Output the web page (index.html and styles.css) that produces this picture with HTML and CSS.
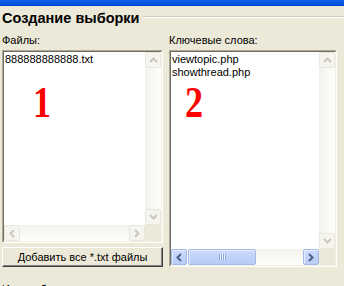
FILE: index.html
```html
<!DOCTYPE html>
<html lang="ru">
<head>
  <meta charset="UTF-8">
  <title>Создание выборки</title>
<link rel="stylesheet" href="styles.css">
</head>
<body>

  <div class="caption"></div>

  <div class="group-head">
    <h2>Создание выборки</h2>
    <div class="group-line"></div>
  </div>

  <div class="columns">
    <div class="col">
      <div class="field-label">Файлы:</div>
      <div class="listbox files">
        <div class="listbox-inner">
          <ul class="items">
            <li>888888888888.txt</li>
          </ul>
          <div class="vscroll">
            <div class="sb-btn off">
              <svg width="9" height="6" viewBox="0 0 9 6"><polyline points="1,5 4.5,1.5 8,5" /></svg>
            </div>
            <div class="sb-track"></div>
            <div class="sb-btn off">
              <svg width="9" height="6" viewBox="0 0 9 6"><polyline points="1,1 4.5,4.5 8,1" /></svg>
            </div>
          </div>
          <div class="hscroll">
            <div class="sb-btn off">
              <svg width="6" height="9" viewBox="0 0 6 9"><polyline points="5,1 1.5,4.5 5,8" /></svg>
            </div>
            <div class="sb-track"></div>
            <div class="sb-btn off">
              <svg width="6" height="9" viewBox="0 0 6 9"><polyline points="1,1 4.5,4.5 1,8" /></svg>
            </div>
          </div>
          <div class="corner"></div>
        </div>
        <span class="mark mark-1">1</span>
      </div>
      <button class="add-btn">Добавить все *.txt файлы</button>
    </div>

    <div class="col">
      <div class="field-label">Ключевые слова:</div>
      <div class="listbox keywords">
        <div class="listbox-inner">
          <ul class="items">
            <li>viewtopic.php</li>
            <li>showthread.php</li>
          </ul>
          <div class="vscroll">
            <div class="sb-btn off">
              <svg width="9" height="6" viewBox="0 0 9 6"><polyline points="1,5 4.5,1.5 8,5" /></svg>
            </div>
            <div class="sb-track"></div>
            <div class="sb-btn off">
              <svg width="9" height="6" viewBox="0 0 9 6"><polyline points="1,1 4.5,4.5 8,1" /></svg>
            </div>
          </div>
          <div class="hscroll">
            <div class="sb-btn on">
              <svg width="6" height="9" viewBox="0 0 6 9"><polyline points="5,1 1.5,4.5 5,8" /></svg>
            </div>
            <div class="sb-track">
              <div class="thumb"><span class="grip"></span></div>
            </div>
            <div class="sb-btn on">
              <svg width="6" height="9" viewBox="0 0 6 9"><polyline points="1,1 4.5,4.5 1,8" /></svg>
            </div>
          </div>
          <div class="corner"></div>
        </div>
        <span class="mark mark-2">2</span>
      </div>
    </div>
  </div>

  <div class="field-label next-label">Имя выборки:</div>

</body>
</html>
```

FILE: styles.css
```css
/* XP-style dialog: "Создание выборки" */
:root {
  --face:   #ECE9D8;
  --shadow: #ACA899;
  --dark:   #716F64;
  --light:  #F1EFE2;
  --red:    #FF0000;
}

body {
  margin: 0;
  width: 344px;
  height: 286px;
  overflow: hidden;
  background: var(--face);
  color: #000;
  font: 11px/13px "Liberation Sans", Arial, sans-serif;
}

.caption {
  height: 6px;
  background: linear-gradient(#0C5EEA, #0A55DF 70%, #0040C0);
}

.group-head {
  display: flex;
  padding: 3px 0 0 2px;
}
.group-head h2 {
  margin: 0;
  font-size: 14.5px;
  line-height: 18px;
  font-weight: bold;
}
.group-line {
  flex: 1;
  align-self: flex-start;
  margin: 7px 0 0 3px;
  border-top: 1px solid #D0D0BF;
  border-bottom: 1px solid #fff;
}

.columns {
  display: grid;
  grid-template-columns: 161px 168px;
  column-gap: 6px;
  padding-left: 2px;
  margin-top: 7px;
}

.field-label {
  height: 13px;
}

.listbox {
  position: relative;
  margin-top: 3px;
  border: 1px solid;
  border-color: var(--shadow) #fff #fff var(--shadow);
}
.listbox.files { height: 191px; }
.listbox.keywords { height: 215px; }

.listbox-inner {
  height: 100%;
  box-sizing: border-box;
  border: 1px solid;
  border-color: var(--dark) var(--light) var(--light) var(--dark);
  background: #fff;
  display: grid;
  grid-template-columns: 1fr 16px;
  grid-template-rows: 1fr 16px;
}

ul.items {
  list-style: none;
  margin: 0;
  padding: 1px 0 0 1px;
  overflow: hidden;
}

/* scrollbars */
.vscroll, .hscroll {
  display: flex;
  background: linear-gradient(to right, #F3F1EC, #FEFEFB);
}
.vscroll { flex-direction: column; }
.hscroll { background: linear-gradient(#F3F1EC, #FEFEFB); }
.sb-track { flex: 1; position: relative; }

.sb-btn {
  width: 16px;
  height: 16px;
  box-sizing: border-box;
  display: flex;
  align-items: center;
  justify-content: center;
  border-radius: 2px;
}
.sb-btn svg polyline {
  fill: none;
  stroke-width: 2;
}
.sb-btn.off {
  border: 1px solid #E8E7DF;
  background: #F5F4EF;
}
.sb-btn.off svg polyline { stroke: #CAC8BB; }
.sb-btn.on {
  border: 1px solid #A5B9E8;
  background: linear-gradient(#CCDBFD, #B8CBF7);
  box-shadow: inset 1px 1px 0 #E4ECFE;
}
.sb-btn.on svg polyline { stroke: #4D6185; }

.thumb {
  position: absolute;
  left: 1px;
  top: 0;
  width: 68px;
  height: 16px;
  box-sizing: border-box;
  border: 1px solid #A5B9E8;
  border-radius: 2px;
  background: linear-gradient(#CCDBFD, #B8CBF7);
  box-shadow: inset 1px 1px 0 #E4ECFE;
  display: flex;
  align-items: center;
  justify-content: center;
}
.grip {
  width: 7px;
  height: 6px;
  background: repeating-linear-gradient(to right, #8CA4DE 0 1px, #EEF3FE 1px 2px);
}

.corner { background: var(--face); }

/* red annotation numbers */
.mark {
  position: absolute;
  top: 30px;
  font: bold 44px/44px "Liberation Serif", "Times New Roman", serif;
  color: var(--red);
  transform: scaleX(0.82);
  transform-origin: left top;
}
.mark-1 { left: 30px; }
.mark-2 { left: 15px; }

.add-btn {
  display: block;
  width: 161px;
  height: 20px;
  margin-top: 4px;
  padding: 0;
  font: 11px "Liberation Sans", Arial, sans-serif;
  color: #000;
  background: var(--face);
  border: 1px solid;
  border-color: #fff #404040 #404040 #fff;
  box-shadow: inset -1px -1px 0 #808080;
}

.next-label {
  margin: 16px 0 0 2px;
}
```
